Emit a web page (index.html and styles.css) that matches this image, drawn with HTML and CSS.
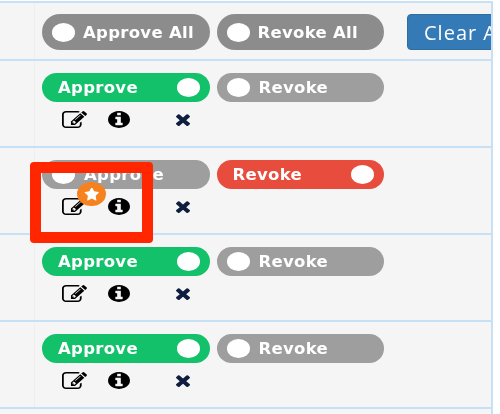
FILE: index.html
```html
<!DOCTYPE html>
<html lang="en">
<head>
    <meta charset="UTF-8">
    <title>Approvals</title>
    <link rel="stylesheet" href="styles.css">
</head>
<body>
    <svg class="defs" width="0" height="0">
        <symbol id="i-edit" viewBox="0 128 1792 1408" preserveAspectRatio="none"><path d="M888 1184l116-116-152-152-116 116v56h96v96h56zm440-720q-16-16-33 1l-350 350q-17 17-1 33t33-1l350-350q17-17 1-33zm80 594v190q0 119-84.5 203.5t-203.5 84.5h-832q-119 0-203.5-84.5t-84.5-203.5v-832q0-119 84.5-203.5t203.5-84.5h832q63 0 117 25 15 7 18 23 3 17-9 29l-49 49q-14 14-32 8-23-6-45-6h-832q-66 0-113 47t-47 113v832q0 66 47 113t113 47h832q66 0 113-47t47-113v-126q0-13 9-22l64-64q15-15 35-7t20 29zm-96-738l288 288-672 672h-288v-288zm444 132l-92 92-288-288 92-92q28-28 68-28t68 28l152 152q28 28 28 68t-28 68z"/></symbol>
        <symbol id="i-info" viewBox="128 128 1536 1536" preserveAspectRatio="none"><path d="M1152 1376v-160q0-14-9-23t-23-9h-96v-512q0-14-9-23t-23-9h-320q-14 0-23 9t-9 23v160q0 14 9 23t23 9h96v320h-96q-14 0-23 9t-9 23v160q0 14 9 23t23 9h448q14 0 23-9t9-23zm-128-896v-160q0-14-9-23t-23-9h-192q-14 0-23 9t-9 23v160q0 14 9 23t23 9h192q14 0 23-9t9-23zm640 416q0 209-103 385.5t-279.5 279.5-385.5 103-385.5-103-279.5-279.5-103-385.5 103-385.5 279.5-279.5 385.5-103 385.5 103 279.5 279.5 103 385.5z"/></symbol>
        <symbol id="i-times" viewBox="302 338 1188 1216" preserveAspectRatio="none"><path d="M1490 1322q0 40-28 68l-136 136q-28 28-68 28t-68-28l-294-294-294 294q-28 28-68 28t-68-28l-136-136q-28-28-28-68t28-68l294-294-294-294q-28-28-28-68t28-68l136-136q28-28 68-28t68 28l294 294 294-294q28-28 68-28t68 28l136 136q28 28 28 68t-28 68l-294 294 294 294q28 28 28 68z"/></symbol>
        <symbol id="i-star" viewBox="0 130 1728 1540" preserveAspectRatio="none"><path d="M1728 647q0 22-26 48l-363 354 86 500q1 7 1 20 0 21-10.5 35.5t-30.5 14.5q-19 0-40-12l-449-236-449 236q-22 12-40 12-21 0-31.5-14.5t-10.5-35.5q0-6 2-20l86-500-364-354q-25-27-25-48 0-37 56-46l502-73 225-455q19-41 49-41t49 41l225 455 502 73q56 9 56 46z"/></symbol>
    </svg>

    <div class="table">
        <div class="row head-row">
            <div class="side"></div>
            <div class="cell head-cell">
                <div class="toggle toggle-all off-dark"><span class="knob"></span><span>Approve All</span></div>
                <div class="toggle toggle-all off-dark"><span class="knob"></span><span>Revoke All</span></div>
                <button class="clear-btn">Clear All</button>
            </div>
        </div>

        <div class="row">
            <div class="side"></div>
            <div class="cell">
                <div class="toggles">
                    <div class="toggle on-green"><span>Approve</span><span class="knob"></span></div>
                    <div class="toggle off"><span class="knob"></span><span>Revoke</span></div>
                </div>
                <div class="actions">
                    <svg class="icon-edit"><use href="#i-edit"/></svg>
                    <svg class="icon-info"><use href="#i-info"/></svg>
                    <svg class="icon-times"><use href="#i-times"/></svg>
                </div>
            </div>
        </div>

        <div class="row">
            <div class="side"></div>
            <div class="cell">
                <div class="toggles">
                    <div class="toggle off"><span class="knob"></span><span>Approve</span></div>
                    <div class="toggle on-red"><span>Revoke</span><span class="knob"></span></div>
                </div>
                <div class="actions">
                    <svg class="icon-edit"><use href="#i-edit"/></svg>
                    <svg class="icon-info"><use href="#i-info"/></svg>
                    <svg class="icon-times"><use href="#i-times"/></svg>
                </div>
            </div>
        </div>

        <div class="row">
            <div class="side"></div>
            <div class="cell">
                <div class="toggles">
                    <div class="toggle on-green"><span>Approve</span><span class="knob"></span></div>
                    <div class="toggle off"><span class="knob"></span><span>Revoke</span></div>
                </div>
                <div class="actions">
                    <svg class="icon-edit"><use href="#i-edit"/></svg>
                    <svg class="icon-info"><use href="#i-info"/></svg>
                    <svg class="icon-times"><use href="#i-times"/></svg>
                </div>
            </div>
        </div>

        <div class="row">
            <div class="side"></div>
            <div class="cell">
                <div class="toggles">
                    <div class="toggle on-green"><span>Approve</span><span class="knob"></span></div>
                    <div class="toggle off"><span class="knob"></span><span>Revoke</span></div>
                </div>
                <div class="actions">
                    <svg class="icon-edit"><use href="#i-edit"/></svg>
                    <svg class="icon-info"><use href="#i-info"/></svg>
                    <svg class="icon-times"><use href="#i-times"/></svg>
                </div>
            </div>
        </div>
    </div>

    <div class="highlight"></div>
    <div class="star-badge"><svg class="icon-star"><use href="#i-star"/></svg></div>
</body>
</html>
```

FILE: styles.css
```css
html {
    background-color: #fff;
}

body {
    margin: 0;
    height: 414px;
    overflow: hidden;
    position: relative;
    font-family: "Open Sans", sans-serif;
    /* the source shot is an upscaled capture, soft on every edge */
    filter: blur(0.4px);
}

.defs {
    position: absolute;
}

.table {
    width: 491px;
    height: 411px;
    margin-top: 1px;
    background-color: #f5f5f5;
    border-top: 2px solid #c6e0f6;
    border-right: 2px solid #c6e0f6;
    overflow: hidden;
}

.row {
    display: flex;
    height: 87px;
    box-sizing: border-box;
    border-bottom: 2px solid #c6e0f6;
}

.head-row {
    height: 58px;
}

.side {
    width: 34px;
    flex-shrink: 0;
    border-right: 1px solid #eeeeee;
}

.cell {
    padding: 12px 0 0 7px;
    flex: 1;
}

.head-cell {
    display: flex;
    align-items: flex-start;
    padding-top: 11px;
    white-space: nowrap;
}

.toggles {
    display: flex;
    gap: 7px;
}

.toggle {
    width: 167.5px;
    height: 29px;
    box-sizing: border-box;
    padding: 0 10px 0 10px;
    border-radius: 15px;
    display: flex;
    align-items: center;
    justify-content: space-between;
    color: #fff;
    font-family: "DejaVu Sans", sans-serif;
    font-size: 16.5px;
    font-weight: 700;
    letter-spacing: 0.3px;
}

.toggle .knob {
    width: 23px;
    height: 19px;
    border-radius: 50%;
    background-color: #fff;
    flex-shrink: 0;
}

.on-green {
    background-color: #13c16a;
    padding-left: 16px;
}

.on-red {
    background-color: #e74c3c;
    padding-left: 16px;
}

.off {
    background-color: #9e9e9e;
    justify-content: flex-start;
    gap: 9px;
}

.off-dark {
    background-color: #8c8c8c;
    justify-content: flex-start;
    gap: 8px;
}

.toggle-all {
    height: 36px;
    border-radius: 18px;
    margin-right: 7px;
}

.clear-btn {
    margin-left: 16px;
    width: 100px;
    height: 36px;
    flex-shrink: 0;
    padding: 0 0 0 16px;
    text-align: left;
    background-color: #337ab7;
    border: 1px solid #2e6da4;
    border-radius: 4px;
    color: #fff;
    font-family: "Open Sans", sans-serif;
    font-size: 20px;
    letter-spacing: 1px;
}

.actions {
    display: flex;
    align-items: center;
    height: 17px;
    margin: 9px 0 0 20px;
}

.icon-edit {
    width: 25px;
    height: 17px;
}

.icon-info {
    width: 22px;
    height: 17px;
    margin-left: 21px;
}

.icon-times {
    width: 14px;
    height: 12px;
    margin-left: 46px;
    fill: #0f1d3f;
}

.highlight {
    position: absolute;
    left: 30px;
    top: 162px;
    width: 123px;
    height: 81px;
    box-sizing: border-box;
    border: 11px solid #ff2600;
    border-radius: 4px;
}

.star-badge {
    position: absolute;
    left: 77px;
    top: 182px;
    width: 29px;
    height: 24px;
    border-radius: 50%;
    background-color: #f5821f;
    display: flex;
    align-items: center;
    justify-content: center;
}

.icon-star {
    width: 15px;
    height: 13px;
    fill: #fff;
}
```
